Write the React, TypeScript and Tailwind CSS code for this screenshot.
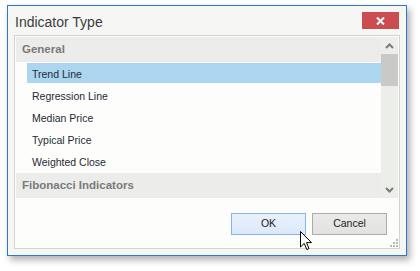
import React from "react";

const font = { fontFamily: '"Liberation Sans", Arial, sans-serif' };

const groups = [
  {
    name: "General",
    items: ["Trend Line", "Regression Line", "Median Price", "Typical Price", "Weighted Close"],
  },
  { name: "Fibonacci Indicators", items: [] as string[] },
];

function Chevron({ down }: { down?: boolean }) {
  return (
    <svg width="9" height="6" viewBox="0 0 9 6" className="block">
      <path
        d={down ? "M1 1 L4.5 4.5 L8 1" : "M1 5 L4.5 1.5 L8 5"}
        fill="none"
        stroke="#7b7b7b"
        strokeWidth="2"
      />
    </svg>
  );
}

export default function App() {
  const selected = "Trend Line";

  return (
    <div className="relative h-[271px] w-[420px] overflow-hidden bg-white pl-[7px] pt-[5px]" style={font}>
      {/* dialog window */}
      <div className="flex h-[251px] w-[400px] flex-col border border-[#2b78cc] bg-[#f6f7f5] shadow-[3px_4px_7px_rgba(0,0,0,0.32)]">
        <div className="flex h-[29px] items-start justify-between pl-[7px] pr-[7px] pt-[6px]">
          <span className="mt-[2px] text-[14px] leading-[16px] text-[#3c3c3c]">Indicator Type</span>
          <button className="flex h-[17px] w-[37px] items-center justify-center bg-[#cc4d50]">
            <svg width="9" height="8" viewBox="0 0 9 8">
              <path d="M1 0.5 L8 7.5 M8 0.5 L1 7.5" stroke="#fff" strokeWidth="2" />
            </svg>
          </button>
        </div>

        <div className="relative mx-[6px] mb-[6px] flex flex-1 flex-col border border-[#d3d4d1] bg-[#fdfdfb]">
          {/* list + scrollbar */}
          <div className="flex h-[162px] p-[1px] pb-0">
            <div className="flex-1">
              {groups.map((g) => (
                <div key={g.name}>
                  <div className="flex h-[25px] items-center bg-[#ecedea] pl-[6px] text-[11.5px] font-bold text-[#7a7a7a]">
                    {g.name}
                  </div>
                  {g.items.length > 0 && (
                    <div className="pl-[11px] pt-[1px]">
                      {g.items.map((it) => (
                        <div
                          key={it}
                          className={`flex h-[22px] items-center pl-[5px] pt-[1px] text-[10.5px] text-[#1f2a36] ${
                            it === selected ? "bg-[linear-gradient(#acd5f0_20px,transparent_20px)]" : ""
                          }`}
                        >
                          {it}
                        </div>
                      ))}
                    </div>
                  )}
                </div>
              ))}
            </div>
            <div className="flex w-[17px] flex-col bg-[#eceeea]">
              <div className="flex h-[17px] items-center justify-center">
                <Chevron />
              </div>
              <div className="h-[32px] bg-[#c9cac7]" />
              <div className="flex-1" />
              <div className="flex h-[17px] items-center justify-center">
                <Chevron down />
              </div>
            </div>
          </div>

          {/* buttons */}
          <div className="flex justify-end gap-[6px] pr-[12px] pt-[15px]">
            <button className="flex h-[22px] w-[75px] items-center justify-center border border-[#86b5e6] bg-[linear-gradient(#e9f2fc,#dce9f8)] text-[10.5px] text-[#222]">
              OK
            </button>
            <button className="flex h-[22px] w-[75px] items-center justify-center border border-[#ababab] bg-[linear-gradient(#eaebe8,#e2e3e0)] text-[10.5px] text-[#222]">
              Cancel
            </button>
          </div>

          {/* resize grip */}
          <svg width="8" height="8" viewBox="0 0 8 8" className="absolute bottom-[1px] right-[1px]">
            <rect x="6" y="0" width="2" height="2" fill="#b9b9b9" />
            <rect x="3" y="3" width="2" height="2" fill="#b9b9b9" />
            <rect x="6" y="3" width="2" height="2" fill="#b9b9b9" />
            <rect x="0" y="6" width="2" height="2" fill="#b9b9b9" />
            <rect x="3" y="6" width="2" height="2" fill="#b9b9b9" />
            <rect x="6" y="6" width="2" height="2" fill="#b9b9b9" />
          </svg>
        </div>
      </div>

      {/* mouse pointer */}
      <svg width="13" height="20" viewBox="0 0 13 20" className="absolute left-[300px] top-[231px]">
        <path
          d="M0.5 0.5 L0.5 16 L4.2 12.4 L6.8 18.5 L9 17.6 L6.5 11.6 L11.5 11.6 Z"
          fill="#fff"
          stroke="#000"
          strokeWidth="1"
          strokeLinejoin="miter"
        />
      </svg>
    </div>
  );
}
